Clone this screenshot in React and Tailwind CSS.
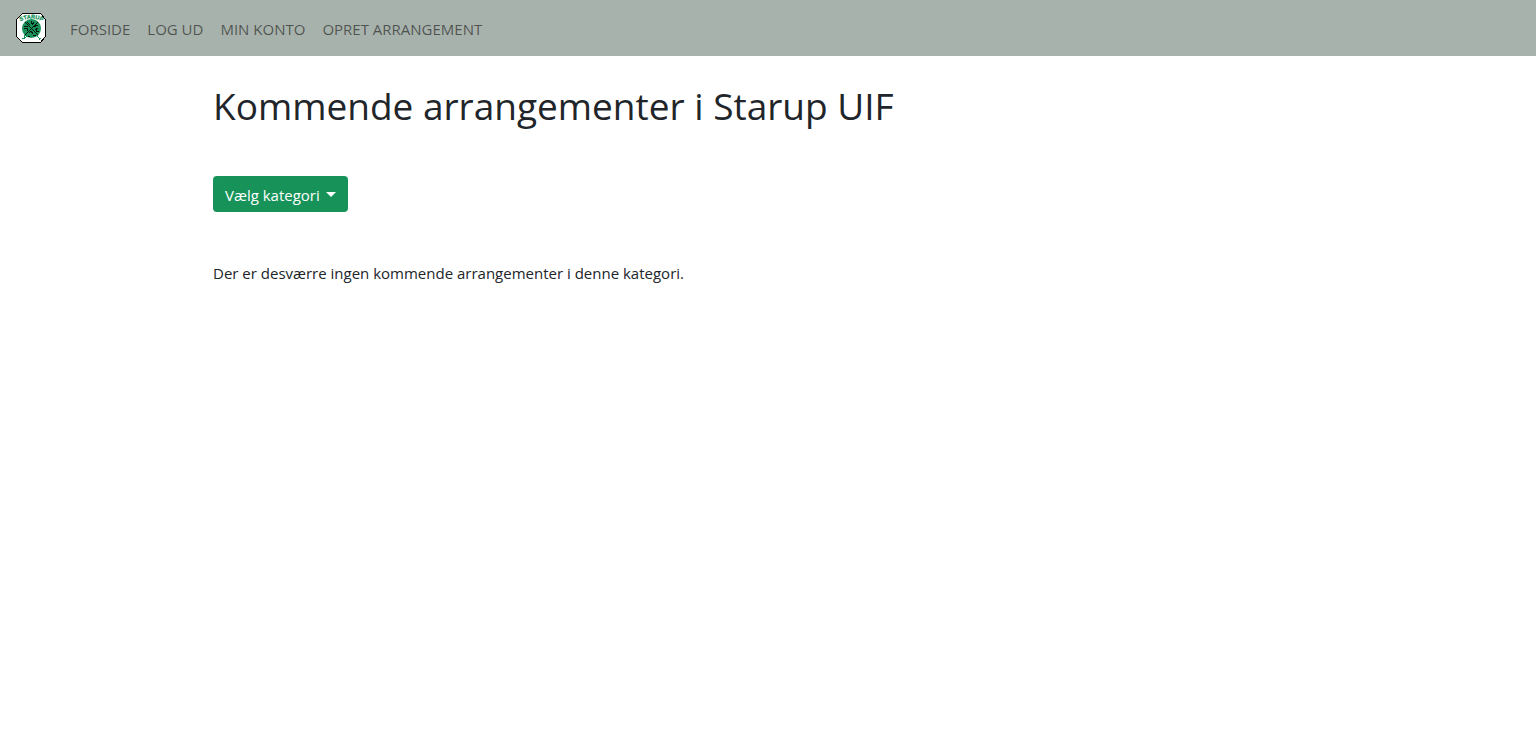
import { useState } from "react";

const navItems = ["FORSIDE", "LOG UD", "MIN KONTO", "OPRET ARRANGEMENT"];

function Logo() {
  return (
    <svg viewBox="0 0 30 30" className="size-[30px]" role="img" aria-label="Starup UIF">
      <path
        d="M6.5 .5h18l5 6v17l-5 6h-18l-6-6v-17z"
        fill="#fff"
        stroke="#000"
        shapeRendering="crispEdges"
      />
      <path id="arc" d="M4 9C9 4.500 22 4.500 27 9" fill="none" />
      <circle cx="15.500" cy="15.500" r="9.5" fill="#17935a" />
      <g stroke="#06170f" strokeWidth="1" fill="none" shapeRendering="crispEdges">
        <path d="M9 9l13 13M22 9L9 22M15 8v3M11 9l3 3M18 9l-2 3M8 13h4M8 15h3v3M19 12h3M20 15v3h3M19 17l3-2M13 20l2-2 2 3M12 23h2M17 22h3M17 14l3-1" />
      </g>
      <text
        fill="#17935a"
        stroke="#17935a"
        strokeWidth=".3"
        fontSize="5.5"
        fontWeight="700"
        fontFamily="Liberation Sans, sans-serif"
      >
        <textPath href="#arc" startOffset="50%" textAnchor="middle">STARUP</textPath>
      </text>
      <path
        d="M6 25h2v-3h2M8 26l3-3M21 23l2 2v2M23 25h2"
        stroke="#17935a"
        fill="none"
        shapeRendering="crispEdges"
      />
    </svg>
  );
}

export default function App() {
  const [open, setOpen] = useState(false);

  return (
    <div className="bg-white font-['Open_Sans','Noto_Sans',sans-serif] text-[15px] leading-6 text-[#212529]">
      <nav className="flex min-h-14 flex-wrap items-center gap-6 bg-[#a8b2ac] px-4">
        <a href="#forside">
          <Logo />
        </a>
        <ul className="flex flex-wrap gap-[17px] pt-0.5">
          {navItems.map((item) => (
            <li key={item}>
              <a href="#menu" className="text-black/55 hover:text-black/70">
                {item}
              </a>
            </li>
          ))}
        </ul>
      </nav>

      <main className="mx-auto max-w-[1140px] px-[15px] pt-6">
        <h1 className="text-[37px] leading-13">Kommende arrangementer i Starup UIF</h1>
        <div className="relative mt-11 w-fit">
          <button
            type="button"
            aria-expanded={open}
            onClick={() => setOpen(!open)}
            className="flex h-9 items-center gap-1.5 rounded bg-[#17935a] px-3 pt-0.5 text-white"
          >
            Vælg kategori
            <span className="mb-0.5 border-x-[5px] border-t-[5px] border-x-transparent border-t-white" />
          </button>
          {open && (
            <ul className="absolute top-full left-0 mt-1 w-40 rounded border border-black/15 bg-white py-2">
              <li className="px-4">Alle</li>
            </ul>
          )}
        </div>
        <p className="mt-[49px]">Der er desværre ingen kommende arrangementer i denne kategori.</p>
      </main>
    </div>
  );
}
